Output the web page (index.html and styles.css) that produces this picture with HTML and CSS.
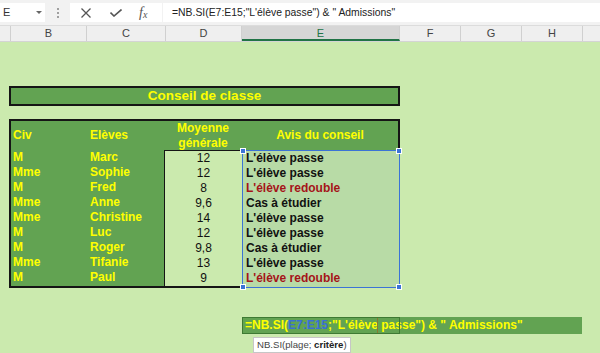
FILE: index.html
```html
<!DOCTYPE html>
<html lang="fr">
<head>
<meta charset="UTF-8">
<meta name="viewport" content="width=device-width, initial-scale=1.0">
<title>Conseil de classe</title>
<link rel="stylesheet" href="styles.css">
</head>
<body>

<div class="toolbar">
  <div class="namebox"><span>E</span><span class="caret"></span></div>
  <div class="grip"><i></i><i></i><i></i></div>
  <div class="fxbox">
    <svg class="ico-x" viewBox="0 0 10 10"><path d="M0.5 0.5l9 9M9.5 0.5l-9 9"/></svg>
    <svg class="ico-ok" viewBox="0 0 12 8"><path d="M0.5 3.5l3.5 3.5 7.5-6.5"/></svg>
    <span class="fx">f<sub>x</sub></span>
  </div>
  <div class="formula">=NB.SI(E7:E15;"L'élève passe") &amp; " Admissions"</div>
</div>

<div class="colheads">
  <div class="ch w-a"></div>
  <div class="ch w-b">B</div>
  <div class="ch w-c">C</div>
  <div class="ch w-d">D</div>
  <div class="ch w-e active">E</div>
  <div class="ch w-f">F</div>
  <div class="ch w-f">G</div>
  <div class="ch w-f">H</div>
  <div class="ch rest"></div>
</div>

<div class="sheet">
  <div class="title">Conseil de classe</div>

  <div class="conseil">
    <div class="thead">
      <div class="th civ">Civ</div>
      <div class="th eleve">Elèves</div>
      <div class="th moy">Moyenne<br>générale</div>
      <div class="th avis">Avis du conseil</div>
    </div>
    <div class="tbody">
      <div class="col civ">
        <div>M</div><div>Mme</div><div>M</div><div>Mme</div><div>Mme</div>
        <div>M</div><div>M</div><div>Mme</div><div>M</div>
      </div>
      <div class="col eleve">
        <div>Marc</div><div>Sophie</div><div>Fred</div><div>Anne</div><div>Christine</div>
        <div>Luc</div><div>Roger</div><div>Tifanie</div><div>Paul</div>
      </div>
      <div class="col moy">
        <div>12</div><div>12</div><div>8</div><div>9,6</div><div>14</div>
        <div>12</div><div>9,8</div><div>13</div><div>9</div>
      </div>
      <div class="col avis">
        <div>L'élève passe</div>
        <div>L'élève passe</div>
        <div class="red">L'élève redouble</div>
        <div>Cas à étudier</div>
        <div>L'élève passe</div>
        <div>L'élève passe</div>
        <div>Cas à étudier</div>
        <div>L'élève passe</div>
        <div class="red">L'élève redouble</div>
        <span class="handle tl"></span>
        <span class="handle tr"></span>
        <span class="handle bl"></span>
        <span class="handle br"></span>
      </div>
    </div>
  </div>

  <div class="edit">
    <div class="edit-text">=NB.SI(<span class="ref">E7:E15</span>;"L'élève passe") &amp; " Admissions"</div>
    <span class="edit-cell"></span>
    <span class="caret-line"></span>
  </div>
  <div class="tip">NB.SI(plage; <b>critère</b>)</div>
</div>

</body>
</html>
```

FILE: styles.css
```css
body {
  margin: 0;
  width: 600px;
  height: 353px;
  overflow: hidden;
  font-family: "Liberation Sans", Arial, sans-serif;
  background-color: #cbeaae;
}

/* barre de formule */
.toolbar {
  display: flex;
  height: 26px;
  padding-top: 3px;
  box-sizing: border-box;
  background-color: #f2f2f2;
  border-bottom: 1px solid #dcdcdc;
}
.namebox {
  position: relative;
  width: 45px;
  height: 19px;
  background-color: #fff;
  font-size: 11px;
  color: #333;
  line-height: 19px;
  padding-left: 3px;
  box-sizing: border-box;
}
.caret {
  position: absolute;
  left: 36px;
  top: 8px;
  border-left: 3px solid transparent;
  border-right: 3px solid transparent;
  border-top: 3px solid #666;
}
.grip {
  width: 25px;
  display: flex;
  flex-direction: column;
  align-items: center;
  padding-top: 5px;
  padding-left: 1px;
  box-sizing: border-box;
}
.grip i {
  width: 2px;
  height: 2px;
  margin-bottom: 2px;
  background-color: #a0a0a0;
}
.fxbox {
  display: flex;
  align-items: center;
  width: 92px;
  height: 19px;
  background-color: #fff;
}
.ico-x {
  width: 10px;
  height: 10px;
  margin-left: 11px;
  fill: none;
  stroke: #555;
  stroke-width: 1.3;
}
.ico-ok {
  width: 12px;
  height: 8px;
  margin-left: 19px;
  fill: none;
  stroke: #555;
  stroke-width: 1.6;
}
.fx {
  margin-left: 17px;
  font-family: "Liberation Serif", "Times New Roman", serif;
  font-style: italic;
  font-size: 14px;
  color: #555;
}
.fx sub {
  font-size: 10px;
  vertical-align: -1px;
}
.formula {
  flex: 1;
  height: 19px;
  margin-left: 1px;
  background-color: #fff;
  padding-left: 9px;
  font-size: 10.4px;
  line-height: 19px;
  color: #222;
}

/* en-tetes de colonnes */
.colheads {
  display: flex;
  height: 15px;
  background-color: #efefef;
  border-bottom: 1px solid #d4d4d4;
}
.ch {
  box-sizing: border-box;
  border-right: 1px solid #d0d0d0;
  font-size: 11px;
  line-height: 15px;
  text-align: center;
  color: #444;
}
.w-a { width: 11px; }
.w-b { width: 76px; }
.w-c { width: 79px; }
.w-d { width: 76px; }
.w-e { width: 158px; }
.w-f { width: 61px; }
.rest { flex: 1; border-right: none; }
.ch.active {
  background-color: #d6d6d6;
  color: #217346;
  border-bottom: 2px solid #217346;
}

/* feuille */
.sheet {
  padding-top: 44px;
}
.title {
  margin-left: 9px;
  width: 391px;
  height: 20px;
  box-sizing: border-box;
  border: 2px solid #151515;
  background-color: #62a352;
  color: #ffff00;
  font-weight: bold;
  font-size: 13.5px;
  line-height: 16px;
  text-align: center;
}
.conseil {
  margin-top: 13px;
  margin-left: 9px;
  width: 391px;
  box-sizing: border-box;
  border: 2px solid #151515;
  background-color: #62a352;
  color: #ffff00;
  font-weight: bold;
  font-size: 12px;
}
.thead, .tbody {
  display: flex;
}
.th {
  height: 29px;
  display: flex;
  align-items: center;
  line-height: 15px;
}
.civ { width: 76px; padding-left: 2px; box-sizing: border-box; }
.eleve { width: 77px; padding-left: 3px; box-sizing: border-box; }
.moy { width: 78px; box-sizing: border-box; text-align: center; justify-content: center; }
.avis { width: 156px; box-sizing: border-box; text-align: center; justify-content: center; }

.col div {
  height: 15px;
  line-height: 15px;
  white-space: nowrap;
}
.col.moy {
  background-color: #cbeaae;
  border-left: 1px solid #151515;
  border-top: 1px solid #151515;
  color: #111;
  font-weight: normal;
}
.col.avis {
  position: relative;
  width: 158px;
  margin-right: -2px;
  margin-bottom: -2px;
  padding: 0 0 1px 3px;
  background-color: #b8dba6;
  border: 1px solid #3b73d6;
  text-align: left;
  color: #111;
}
.col.avis .red {
  color: #a51419;
}
.handle {
  position: absolute;
  width: 4px;
  height: 4px;
  background-color: #3b73d6;
  border: 1px solid #fff;
}
.tl { left: -3px; top: -3px; }
.tr { right: -3px; top: -3px; }
.bl { left: -3px; bottom: -3px; }
.br { right: -3px; bottom: -3px; }

/* cellule en cours d'edition */
.edit {
  position: relative;
  margin-top: 29px;
  margin-left: 242px;
  width: 340px;
  height: 17px;
  background-color: #62a352;
}
.edit-text {
  padding-left: 3px;
  font-weight: bold;
  font-size: 12px;
  line-height: 17px;
  color: #ffff00;
  white-space: nowrap;
}
.edit-text .ref {
  color: #3a6fd8;
}
.edit-cell {
  position: absolute;
  left: 0;
  top: 0;
  width: 158px;
  height: 17px;
  box-sizing: border-box;
  border: 1px solid #3e7a33;
}
.caret-line {
  position: absolute;
  left: 135px;
  top: 1px;
  width: 1px;
  height: 15px;
  background-color: #8a7a30;
}
.tip {
  display: inline-block;
  margin-top: 2px;
  margin-left: 253px;
  padding: 0 3px;
  height: 16px;
  background-color: #fff;
  border: 1px solid #c6c6c6;
  box-sizing: border-box;
  font-size: 9.6px;
  line-height: 14px;
  color: #444;
}
.tip b {
  color: #222;
}
```
